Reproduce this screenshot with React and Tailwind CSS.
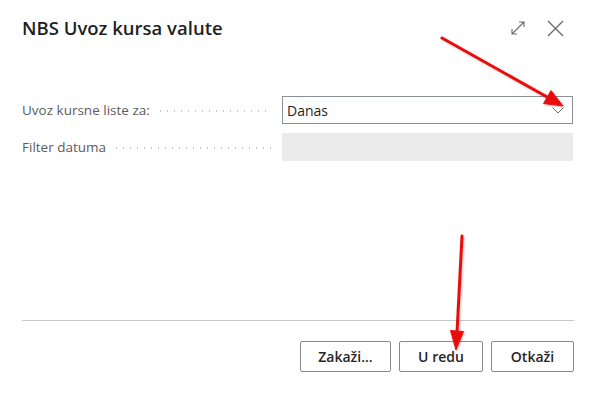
import React from 'react';

const font = { fontFamily: '"Open Sans", "Noto Sans", sans-serif' };

// Dotted leader between the label and its field
function Leader() {
  return (
    <div className="flex-1 h-[2px] ml-[7px] mr-[10px] mt-[2px] bg-[radial-gradient(circle,#c8c8c8_0.8px,transparent_1px)] bg-[length:7px_2px]" />
  );
}

function Field({ label, children }) {
  return (
    <div className="flex items-center h-[28px]">
      <div className="flex items-center w-[260px]">
        <span className="text-[13.5px] text-[#5c5c5c] whitespace-nowrap">{label}</span>
        <Leader />
      </div>
      {children}
    </div>
  );
}

function Button({ children, w }) {
  return (
    <button className={`h-[31px] ${w} border border-[#8a8a8a] rounded-[2px] bg-white text-[14px] font-semibold text-[#262626]`}>
      {children}
    </button>
  );
}

export default function App() {
  return (
    <div className="relative w-[596px] h-[393px] bg-white flex flex-col px-[22px] text-[#262626]" style={font}>
      <div className="h-[56px] flex items-center justify-between">
        <h1 className="text-[18.5px] font-semibold text-[#1f1f1f]">NBS Uvoz kursa valute</h1>
        <div className="flex items-center gap-[21px] mr-[10px]">
          <svg width="16" height="16" viewBox="0 0 16 16" fill="none" stroke="#6b6b6b" strokeWidth="1.1">
            <path d="M2 14 L14 2 M9 2 H14 V7 M2 9 V14 H7" />
          </svg>
          <svg width="17" height="17" viewBox="0 0 17 17" fill="none" stroke="#6b6b6b" strokeWidth="1.4">
            <path d="M1 1 L16 16 M16 1 L1 16" />
          </svg>
        </div>
      </div>

      <div className="mt-[40px] flex flex-col gap-[9px]">
        <Field label="Uvoz kursne liste za:">
          <div className="w-[291px] h-[28px] border border-[#8a9099] flex items-center justify-between pl-[4px] pr-[8px]">
            <span className="text-[14px] text-[#1f1f1f]">Danas</span>
            <svg width="12" height="7" viewBox="0 0 12 7" fill="none" stroke="#6b6b6b" strokeWidth="1">
              <path d="M0.5 0.5 L6 6 L11.5 0.5" />
            </svg>
          </div>
        </Field>
        <Field label="Filter datuma">
          <div className="w-[291px] h-[28px] bg-[#ebebec]" />
        </Field>
      </div>

      <div className="flex-1" />
      <div className="h-[1px] bg-[#c8c8c8]" />
      <div className="flex justify-end gap-[8px] mt-[20px] mb-[21px]">
        <Button w="w-[91px]">Zakaži...</Button>
        <Button w="w-[84px]">U redu</Button>
        <Button w="w-[83px]">Otkaži</Button>
      </div>

      <svg className="absolute inset-0 pointer-events-none" width="596" height="393" viewBox="0 0 596 393">
        <defs>
          <filter id="sh" x="-20%" y="-20%" width="140%" height="140%">
            <feDropShadow dx="1" dy="1" stdDeviation="1" floodColor="#000" floodOpacity="0.25" />
          </filter>
        </defs>
        <g filter="url(#sh)" fill="#e8100f" stroke="#e8100f">
          <line x1="442" y1="38" x2="548" y2="97.5" strokeWidth="3" strokeLinecap="round" />
          <polygon points="563,106 543.5,103.5 551,90.5" strokeWidth="1" />
          <line x1="462" y1="236" x2="457" y2="333" strokeWidth="3" strokeLinecap="round" />
          <polygon points="456,350 450.5,330.5 463.5,331.5" strokeWidth="1" />
        </g>
      </svg>
    </div>
  );
}
